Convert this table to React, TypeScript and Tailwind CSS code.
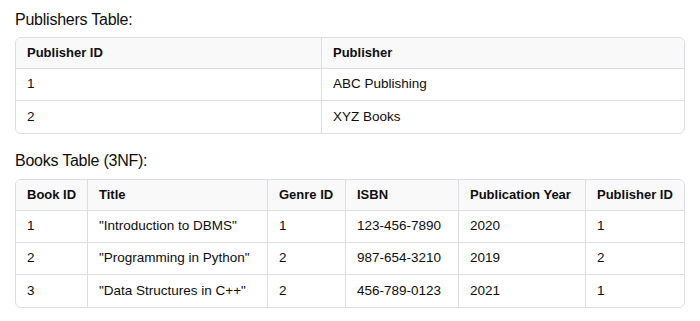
import React from 'react';

type Table = {
  cols: string;
  head: string[];
  rows: string[][];
};

const publishers: Table = {
  cols: 'grid-cols-[306px_1fr]',
  head: ['Publisher ID', 'Publisher'],
  rows: [
    ['1', 'ABC Publishing'],
    ['2', 'XYZ Books'],
  ],
};

const books: Table = {
  cols: 'grid-cols-[72px_180px_78px_113px_127px_1fr]',
  head: ['Book ID', 'Title', 'Genre ID', 'ISBN', 'Publication Year', 'Publisher ID'],
  rows: [
    ['1', '"Introduction to DBMS"', '1', '123-456-7890', '2020', '1'],
    ['2', '"Programming in Python"', '2', '987-654-3210', '2019', '2'],
    ['3', '"Data Structures in C++"', '2', '456-789-0123', '2021', '1'],
  ],
};

function DataTable({ table }: { table: Table }) {
  return (
    <div className="border border-[#dcdce3] rounded-[6px] overflow-hidden">
      <div className={`grid ${table.cols} h-[31px] bg-[#f9f9fa] border-b border-[#dcdce3]`}>
        {table.head.map((h, i) => (
          <div
            key={h}
            className={`flex items-center pl-[11px] font-bold text-[13px] ${i < table.head.length - 1 ? 'border-r border-[#dcdce3]' : ''}`}
          >
            {h}
          </div>
        ))}
      </div>
      {table.rows.map((row, r) => (
        <div
          key={r}
          className={`grid ${table.cols} h-[32px] ${r < table.rows.length - 1 ? 'border-b border-[#dcdce3]' : ''}`}
        >
          {row.map((c, i) => (
            <div
              key={i}
              className={`flex items-center pl-[11px] text-[13.5px] ${i < row.length - 1 ? 'border-r border-[#dcdce3]' : ''}`}
            >
              {c}
            </div>
          ))}
        </div>
      ))}
    </div>
  );
}

export default function App() {
  return (
    <div className="w-[700px] h-[321px] bg-white text-[#0d0d0d] px-[15px] pt-[8px] font-['Liberation_Sans',Arial,sans-serif] overflow-hidden">
      <h3 className="text-[16px] leading-[24px] tracking-[-0.015em] mb-[5px]">Publishers Table:</h3>
      <DataTable table={publishers} />
      <h3 className="text-[16px] leading-[24px] tracking-[-0.015em] mt-[15px] mb-[6px]">Books Table (3NF):</h3>
      <DataTable table={books} />
    </div>
  );
}
